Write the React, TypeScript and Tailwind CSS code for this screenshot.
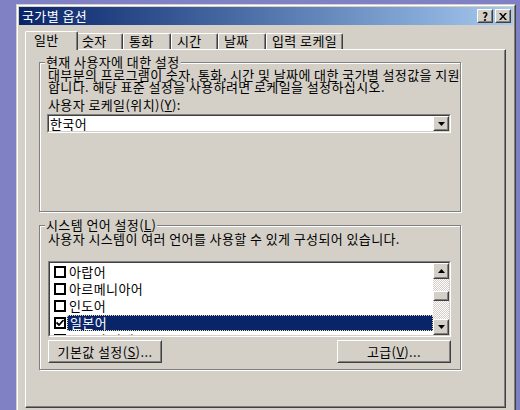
import React from "react";

const TABS = [
  { label: "일반", w: "w-[53px]", active: true },
  { label: "숫자", w: "w-[47px]" },
  { label: "통화", w: "w-[48px]" },
  { label: "시간", w: "w-[47px]" },
  { label: "날짜", w: "w-[48px]" },
  { label: "입력 로케일", w: "w-[77px]" },
];

const LANGS = [
  { label: "아랍어" },
  { label: "아르메니아어" },
  { label: "인도어" },
  { label: "일본어", checked: true, selected: true },
  { label: "중국어 간체" },
];

function Raised({ className = "", children }: { className?: string; children?: React.ReactNode }) {
  return (
    <div className={`border border-t-white border-l-white border-r-[#404040] border-b-[#404040] bg-[#d4d0c8] ${className}`}>
      <div className="flex h-full w-full items-center justify-center border border-t-[#d4d0c8] border-l-[#d4d0c8] border-r-[#808080] border-b-[#808080]">
        {children}
      </div>
    </div>
  );
}

function Arrow({ up }: { up?: boolean }) {
  return (
    <svg width="7" height="4" viewBox="0 0 7 4" className={up ? "rotate-180" : ""}>
      <path d="M0 0h7L3.5 4z" fill="#000" />
    </svg>
  );
}

function Mn({ children }: { children: React.ReactNode }) {
  return <span className="underline underline-offset-[1px]">{children}</span>;
}

function GroupBox({ label, className, children }: { label: React.ReactNode; className: string; children: React.ReactNode }) {
  return (
    <div className={`flex w-[422px] flex-col border border-[#808080] shadow-[inset_1px_1px_0_#fff,1px_1px_0_#fff] ${className}`}>
      <div className="-mt-[8px] ml-[5px] self-start bg-[#d4d0c8] px-[1px] leading-[14px]">{label}</div>
      <div className="pl-[8px]">{children}</div>
    </div>
  );
}

export default function App() {
  return (
    <div className="h-[410px] w-[520px] overflow-hidden bg-[#8080c4] pl-[16px] pt-[4px] font-['Noto_Sans_CJK_KR','Noto_Sans',sans-serif] text-[13px] leading-[14px] tracking-[0.4px] text-black">
      <div className="h-[430px] w-[500px] border border-t-[#d4d0c8] border-l-[#d4d0c8] border-r-[#404040] border-b-[#404040] bg-[#d4d0c8]">
        <div className="flex h-full flex-col border border-t-white border-l-white border-r-[#808080] border-b-[#808080] p-[1px]">
          {/* title bar */}
          <div className="flex h-[18px] items-center bg-linear-to-r from-[#0a246a] to-[#a6caf0] pl-[3px] pr-[2px]">
            <span className="flex-1 text-white">국가별 옵션</span>
            <div className="flex gap-[2px]">
              <Raised className="h-[14px] w-[16px]">
                <span className="text-[11px] font-bold leading-[10px] tracking-normal">?</span>
              </Raised>
              <Raised className="h-[14px] w-[16px]">
                <svg width="8" height="7" viewBox="0 0 8 7">
                  <path d="M0 0h2l2 2.5L6 0h2L5 3.5 8 7H6L4 4.5 2 7H0l3-3.5z" fill="#000" />
                </svg>
              </Raised>
            </div>
          </div>

          <div className="pl-[6px] pt-[6px]">
            {/* tabs */}
            <div className="flex items-end pl-[2px]">
              {TABS.map((t) =>
                t.active ? (
                  <div
                    key={t.label}
                    className={`relative z-10 -mx-[2px] -mb-[1px] h-[19px] ${t.w} rounded-t-[2px] border border-b-0 border-t-white border-l-white border-r-[#404040] bg-[#d4d0c8] pl-[8px] pt-[1px] shadow-[inset_-1px_0_0_#808080]`}
                  >
                    {t.label}
                  </div>
                ) : (
                  <div
                    key={t.label}
                    className={`h-[16px] ${t.w} rounded-t-[2px] border border-b-0 border-t-white border-l-white border-r-[#404040] pl-[5px] shadow-[inset_-1px_0_0_#808080] whitespace-nowrap`}
                  >
                    {t.label}
                  </div>
                )
              )}
            </div>

            {/* tab page */}
            <div className="h-[359px] w-[481px] border border-t-white border-l-white border-r-[#404040] border-b-[#404040] pl-[13px] pt-[12px] shadow-[inset_-1px_-1px_0_#808080]">
              <GroupBox label="현재 사용자에 대한 설정" className="h-[150px]">
                <p className="whitespace-nowrap leading-[12px]">
                  대부분의 프로그램이 숫자, 통화, 시간 및 날짜에 대한 국가별 설정값을 지원
                  <br />
                  합니다. 해당 표준 설정을 사용하려면 로케일을 설정하십시오.
                </p>
                <div className="mt-[5px]">
                  사용자 로케일(위치)(<Mn>Y</Mn>):
                </div>
                <div className="-ml-[1px] mt-[2px] h-[19px] w-[404px] border border-t-[#808080] border-l-[#808080] border-r-white border-b-white">
                  <div className="flex h-full items-center border border-t-[#404040] border-l-[#404040] border-r-[#d4d0c8] border-b-[#d4d0c8] bg-white">
                    <span className="flex-1 pl-[1px]">한국어</span>
                    <Raised className="h-[15px] w-[16px]">
                      <Arrow />
                    </Raised>
                  </div>
                </div>
              </GroupBox>

              <GroupBox
                label={
                  <>
                    시스템 언어 설정(<Mn>L</Mn>)
                  </>
                }
                className="mt-[13px] h-[145px]"
              >
                <p className="whitespace-nowrap">사용자 시스템이 여러 언어를 사용할 수 있게 구성되어 있습니다.</p>

                {/* list */}
                <div className="mt-[15px] h-[76px] w-[403px] border border-t-[#808080] border-l-[#808080] border-r-white border-b-white">
                  <div className="flex h-full border border-t-[#404040] border-l-[#404040] border-r-[#d4d0c8] border-b-[#d4d0c8] bg-white">
                    <div className="flex-1 overflow-hidden">
                      {LANGS.map((l) => (
                        <div key={l.label} className="flex h-[17px] items-center pl-[4px]">
                          <div className="flex h-[12px] w-[12px] shrink-0 items-center justify-center border-2 border-black bg-white">
                            {l.checked && (
                              <svg width="8" height="7" viewBox="0 0 8 7">
                                <path d="M0.5 3.5L3 6L7.5 1" stroke="#000" strokeWidth="1.8" fill="none" />
                              </svg>
                            )}
                          </div>
                          <span
                            className={`ml-[1px] flex h-[16px] flex-1 items-center pl-[2px] ${
                              l.selected ? "border border-dotted border-[#e6dca0] bg-[#0a246a] pl-[1px] text-white" : ""
                            }`}
                          >
                            {l.label}
                          </span>
                        </div>
                      ))}
                    </div>
                    {/* scrollbar */}
                    <div className="flex w-[16px] flex-col">
                      <Raised className="h-[16px] w-[16px]">
                        <Arrow up />
                      </Raised>
                      <div className="flex-1 bg-[image:repeating-conic-gradient(#d4d0c8_0%_25%,#ffffff_0%_50%)] bg-[length:2px_2px] pt-[12px]">
                        <Raised className="h-[10px] w-[16px]" />
                      </div>
                      <Raised className="h-[16px] w-[16px]">
                        <Arrow />
                      </Raised>
                    </div>
                  </div>
                </div>

                <div className="mt-[3px] flex w-[403px] justify-between">
                  <Raised className="h-[23px] w-[114px]">
                    기본값 설정(<Mn>S</Mn>)...
                  </Raised>
                  <Raised className="h-[23px] w-[114px]">
                    고급(<Mn>V</Mn>)...
                  </Raised>
                </div>
              </GroupBox>
            </div>
          </div>
        </div>
      </div>
    </div>
  );
}
